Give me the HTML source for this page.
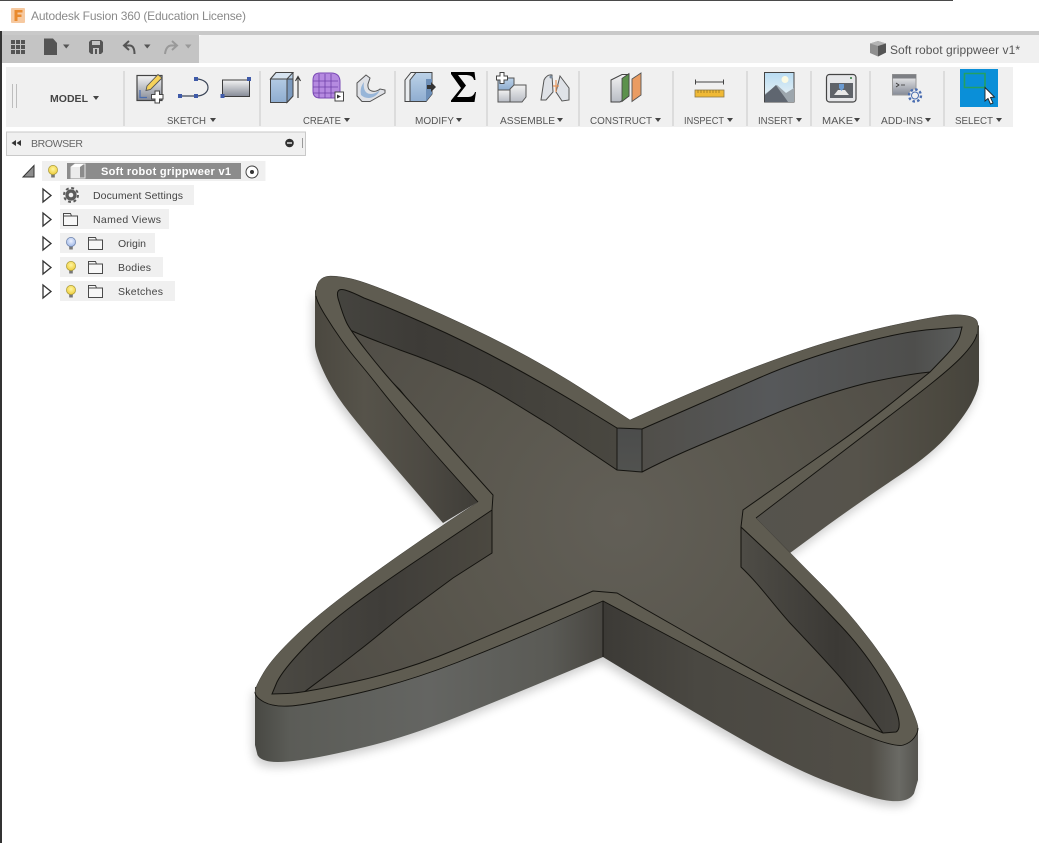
<!DOCTYPE html>
<html><head><meta charset="utf-8"><title>Autodesk Fusion 360</title>
<style>
html,body{margin:0;padding:0;background:#fff;width:1039px;height:843px;overflow:hidden}
svg{display:block;position:absolute;left:0;top:0}
text{font-family:"Liberation Sans",sans-serif;font-size:10.5px;fill:#555}
</style></head><body>
<svg xmlns="http://www.w3.org/2000/svg" width="1039" height="843" viewBox="0 0 1039 843">
<defs>
<linearGradient id="g1" x1="0" y1="0" x2="0" y2="1"><stop offset="0" stop-color="#f4f4f4"/><stop offset="1" stop-color="#858a96"/></linearGradient>
<linearGradient id="gB" x1="0" y1="0" x2="0" y2="1"><stop offset="0" stop-color="#bcd2e8"/><stop offset="1" stop-color="#8fadd0"/></linearGradient>
<linearGradient id="gG" x1="0" y1="0" x2="0" y2="1"><stop offset="0" stop-color="#f2f2f2"/><stop offset="1" stop-color="#b8bcc4"/></linearGradient>
<linearGradient id="sky" x1="0" y1="0" x2="0" y2="1"><stop offset="0" stop-color="#b9dcf3"/><stop offset="1" stop-color="#eef4f4"/></linearGradient>
<radialGradient id="bulbY" cx=".5" cy=".4" r=".6"><stop offset="0" stop-color="#fff6a0"/><stop offset="1" stop-color="#eecb3a"/></radialGradient>
<radialGradient id="bulbB" cx=".5" cy=".4" r=".6"><stop offset="0" stop-color="#eef3ff"/><stop offset="1" stop-color="#9db6e6"/></radialGradient>
<g id="folder"><path d="M.5,.5H7.5L8.5,3H14.5V12.5H.5Z M.5,3H8.5" fill="#f7f7f7" stroke="#4a4a4a" stroke-width="1"/></g>
<g id="tri"><path d="M1,.5L9,7L1,13.5Z" fill="#fff" stroke="#333" stroke-width="1.3"/></g>
<g id="bulbYs"><path d="M-1.8,3H1.8V6.5H-1.8Z" fill="#777"/><circle cy="-1" r="4.6" fill="url(#bulbY)" stroke="#a89a3a" stroke-width=".7"/></g>
<g id="bulbBs"><path d="M-1.8,3H1.8V6.5H-1.8Z" fill="#777"/><circle cy="-1" r="4.6" fill="url(#bulbB)" stroke="#6c80a8" stroke-width=".7"/></g>

<path id="O" d="M630,420Q700,388 750,369Q800,350 835,340Q870,330 901.5,323.5Q933,317 945,315.5Q957,314 966,315.5Q975,317 977,321Q979,325 977,334Q975,343 961,357.5Q947,372 907,402.5Q867,433 756,518L781.5,544Q807,570 823.5,586.5Q840,603 856.5,623Q873,643 886.5,663Q900,683 909,703Q918,723 918,728Q918,733 914,738Q910,743 903.5,745Q897,747 877,740Q857,733 807,708Q757,683 680,642L603,601L555,622Q507,643 457,662.5Q407,682 357,693.5Q307,705 290,706Q273,707 264,702Q255,697 255,692Q255,687 264,672Q273,657 298,633.5Q323,610 371.5,575Q420,540 478,502L455.500,477Q433,452 413,428.5Q393,405 380,388.5Q367,372 358.5,362Q350,352 341.5,340Q333,328 325,315Q317,302 316,296Q315,290 317.5,284Q320,278 326.5,276.5Q333,275 350,278.5Q367,282 417,303.5Q467,325 508.5,346.5Q550,368 590,394L630,420Z"/>
<path id="I" d="M642,429L681,412Q720,395 760,377.5Q800,360 850,346Q900,332 931,329.5L962,327L960,335Q958,343 944,357.5L930,372L898.500,397.500Q867,423 833.5,446.5Q800,470 771.5,490L743,510L741,527L764,548.5Q787,570 805,588.5Q823,607 840,625Q857,643 870,661.5Q883,680 890.5,696.5Q898,713 899,721.5Q900,730 896,732L883,733L853,720Q823,707 790,690Q757,673 687,633L617,593L593,591L550,609.5Q507,628 457,649Q407,670 355,681.5Q303,693 287.5,693.5L272,694L277,682Q283,670 303,649Q323,628 348,609Q373,590 410,565Q447,540 492,510L493,495L475,475Q457,455 435,430Q413,405 398,388.5Q383,372 366.5,351Q350,330 346.5,322.5Q343,315 339,301.5Q334,287 345,290Q352,292 364,298Q383,305 425,323.5Q467,342 508.5,364.5Q550,387 583.5,407.5L617,428Z"/>
<path id="F" d="M617,470L642,472C680,452 725,435 767,417C800,403 835,391 867,383C890,378 910,374 930,372L945,372L800,490L741,527L741,567C760,585 772,603 790,623C808,642 825,660 840,677C855,695 870,715 883,733L883,745L600,620L300,700L303,693C320,680 338,667 357,652C373,640 390,625 407,612C423,600 438,589 453,578L492,553L492,510L480,490L400,390L345,335L350,330C365,337 382,343 400,350C423,358 445,367 467,377C495,390 525,410 550,425C572,440 595,455 617,470Z"/>
<clipPath id="clipI"><use href="#I"/></clipPath>

<linearGradient id="wUL" gradientUnits="userSpaceOnUse" x1="315" y1="0" x2="480" y2="0"><stop offset="0" stop-color="#4b4840"/><stop offset=".3" stop-color="#56534a"/><stop offset=".65" stop-color="#4d4a43"/><stop offset="1" stop-color="#3e3c37"/></linearGradient>
<linearGradient id="wR" gradientUnits="userSpaceOnUse" x1="756" y1="0" x2="980" y2="0"><stop offset="0" stop-color="#55534d"/><stop offset=".45" stop-color="#56534b"/><stop offset=".85" stop-color="#4b483f"/><stop offset="1" stop-color="#45433c"/></linearGradient>
<linearGradient id="wLL" gradientUnits="userSpaceOnUse" x1="255" y1="0" x2="603" y2="0"><stop offset="0" stop-color="#484843"/><stop offset=".1" stop-color="#5b5c57"/><stop offset=".5" stop-color="#646562"/><stop offset=".85" stop-color="#5a5a55"/><stop offset="1" stop-color="#484641"/></linearGradient>
<linearGradient id="wLR" gradientUnits="userSpaceOnUse" x1="603" y1="0" x2="918" y2="0"><stop offset="0" stop-color="#3c3a36"/><stop offset=".3" stop-color="#4a4842"/><stop offset=".85" stop-color="#514e47"/><stop offset=".94" stop-color="#6a6a65"/><stop offset="1" stop-color="#55544f"/></linearGradient>
<linearGradient id="iUL" gradientUnits="userSpaceOnUse" x1="335" y1="0" x2="617" y2="0"><stop offset="0" stop-color="#45443f"/><stop offset=".3" stop-color="#3d3b37"/><stop offset="1" stop-color="#494740"/></linearGradient>
<linearGradient id="iR" gradientUnits="userSpaceOnUse" x1="642" y1="0" x2="962" y2="0"><stop offset="0" stop-color="#504e49"/><stop offset=".4" stop-color="#56585a"/><stop offset=".85" stop-color="#4e4e4c"/><stop offset="1" stop-color="#5b5d5c"/></linearGradient>
<linearGradient id="iLL" gradientUnits="userSpaceOnUse" x1="272" y1="0" x2="492" y2="0"><stop offset="0" stop-color="#4b4943"/><stop offset=".5" stop-color="#3f3d39"/><stop offset="1" stop-color="#4b4840"/></linearGradient>
<linearGradient id="iLR" gradientUnits="userSpaceOnUse" x1="741" y1="0" x2="900" y2="0"><stop offset="0" stop-color="#4e4c46"/><stop offset=".6" stop-color="#3b3935"/><stop offset="1" stop-color="#46443f"/></linearGradient>
<linearGradient id="iC" x1="0" y1="0" x2="0" y2="1"><stop offset="0" stop-color="#4a4b4b"/><stop offset="1" stop-color="#525350"/></linearGradient>
<radialGradient id="fl" gradientUnits="userSpaceOnUse" cx="620" cy="520" r="330"><stop offset="0" stop-color="#625f57"/><stop offset=".5" stop-color="#5a574e"/><stop offset="1" stop-color="#504d46"/></radialGradient>
<filter id="bl" x="-10%" y="-10%" width="120%" height="120%"><feGaussianBlur stdDeviation="5"/></filter>
<path id="W1" d="M315,290L315,345Q315,353 324,372.5Q333,392 350,413.5Q367,435 405,479L443,523L478,502L420,420L345,310Z"/>
<path id="W2" d="M756,518L790,553L828,525Q867,497 900,475Q933,453 950,433Q967,413 973,400Q979,388 979,380L979,325L960,340L850,420Z"/>
<path id="W3" d="M255,687L255,745L257.5,755Q260,760 270,761.5Q280,763 301,760Q323,757 365,747Q407,737 457,717Q507,697 555,677L603,657L603,601L500,620L300,680Z"/>
<path id="W4" d="M603,601L603,657L646,683Q690,710 740,738.5Q790,767 823,780Q857,793 873,797.5Q890,802 900,801Q910,800 914,793.5L918,780L918,728L890,710L757,660L603,590Z"/>
</defs>

<rect width="1039" height="843" fill="#fff"/>

<!-- window chrome -->
<rect x="0" y="0" width="953" height="1" fill="#4a4a4a"/>
<rect x="0" y="31" width="1039" height="4" fill="#c9c9c9"/>
<rect x="0" y="31" width="2" height="812" fill="#333"/>
<rect x="2" y="35" width="197" height="28" fill="#c4c4c4"/>
<path d="M199,63V38Q199,35 202,35H1039V63Z" fill="#f0f0f0"/>

<!-- logo + title -->
<rect x="11" y="8" width="14" height="15" rx="1" fill="#f6c9a0"/>
<path d="M14.5,10H22.5V12.5H17.5V14.5H21.5V17H17.5V21H14.5Z" fill="#e98a2e"/>
<text x="31" y="20" style="font-size:12px;fill:#8a8a8a" textLength="215" lengthAdjust="spacing">Autodesk Fusion 360 (Education License)</text>

<!-- QAT -->
<g fill="#555">
<path d="M11,40h4v4h-4zM16,40h4v4h-4zM21,40h4v4h-4zM11,45h4v4h-4zM16,45h4v4h-4zM21,45h4v4h-4zM11,50h4v4h-4zM16,50h4v4h-4zM21,50h4v4h-4z"/>
<path d="M44,38.500H53L57,43V55H44Z"/>
<path d="M63,44.500H69.500L66.250,48.500Z"/>
<path d="M91,40H101L103,42V52L101,54H91L89,52V42Z"/>
<path d="M144,44.500H150.500L147.250,48.500Z"/>
</g>
<rect x="92" y="41" width="8" height="4" fill="#c4c4c4"/><rect x="93" y="48" width="6" height="6" fill="#c4c4c4"/><rect x="95" y="49" width="2" height="5" fill="#555"/>
<path d="M129,41L124,45.500L129,50" fill="none" stroke="#555" stroke-width="2"/><path d="M124.500,45.500H130Q134.500,46 134.500,54" fill="none" stroke="#555" stroke-width="2"/>
<path d="M172,41L177,45.500L172,50" fill="none" stroke="#999" stroke-width="2"/><path d="M176.500,45.500H171Q166,46 165,54" fill="none" stroke="#999" stroke-width="2"/>
<path d="M185,44.500H191.500L188.250,48.500Z" fill="#999"/>

<!-- doc tab -->
<path d="M878,41L886,43.500V52.500L878,56.500L870,53V43.500Z" fill="#8f8f8f"/><path d="M878,41L886,43.500L878,46L870,43.500Z" fill="#b4b4b4"/><path d="M878,46L886,43.500V52.500L878,56.500Z" fill="#555"/>
<text x="890" y="54" style="font-size:12px;fill:#555" textLength="130" lengthAdjust="spacing">Soft robot grippweer v1*</text>

<!-- toolbar -->
<rect x="6" y="67" width="1007" height="60" fill="#f0f0f0"/>
<g fill="#dcdcdc">
<rect x="123" y="71" width="2" height="55"/><rect x="259" y="71" width="2" height="55"/><rect x="394" y="71" width="2" height="55"/><rect x="486" y="71" width="2" height="55"/><rect x="578" y="71" width="2" height="55"/><rect x="672" y="71" width="2" height="55"/><rect x="746" y="71" width="2" height="55"/><rect x="810" y="71" width="2" height="55"/><rect x="869" y="71" width="2" height="55"/><rect x="943" y="71" width="2" height="55"/>
</g>
<path d="M12.500,84V108M16.500,84V108" stroke="#bdbdbd" stroke-width="1"/>
<text x="50" y="102" style="font-weight:bold;fill:#444" textLength="38" lengthAdjust="spacing">MODEL</text>
<path d="M93,96H99L96,100Z" fill="#444"/>

<g style="font-size:11px">
<text x="167" y="124" textLength="39" lengthAdjust="spacingAndGlyphs">SKETCH</text>
<text x="303" y="124" textLength="38" lengthAdjust="spacingAndGlyphs">CREATE</text>
<text x="415" y="124" textLength="39" lengthAdjust="spacingAndGlyphs">MODIFY</text>
<text x="500" y="124" textLength="55" lengthAdjust="spacingAndGlyphs">ASSEMBLE</text>
<text x="590" y="124" textLength="62" lengthAdjust="spacingAndGlyphs">CONSTRUCT</text>
<text x="684" y="124" textLength="40" lengthAdjust="spacingAndGlyphs">INSPECT</text>
<text x="758" y="124" textLength="35" lengthAdjust="spacingAndGlyphs">INSERT</text>
<text x="822" y="124" textLength="31" lengthAdjust="spacingAndGlyphs">MAKE</text>
<text x="881" y="124" textLength="42" lengthAdjust="spacingAndGlyphs">ADD-INS</text>
<text x="955" y="124" textLength="38" lengthAdjust="spacingAndGlyphs">SELECT</text>
</g>
<g fill="#444">
<path d="M210,118H216L213,122Z"/><path d="M344,118H350L347,122Z"/><path d="M456,118H462L459,122Z"/><path d="M557,118H563L560,122Z"/><path d="M655,118H661L658,122Z"/><path d="M727,118H733L730,122Z"/><path d="M796,118H802L799,122Z"/><path d="M854,118H860L857,122Z"/><path d="M925,118H931L928,122Z"/><path d="M996,118H1002L999,122Z"/>
</g>

<!-- sketch icon -->
<rect x="137" y="75.500" width="25" height="25" fill="url(#g1)" stroke="#444" stroke-width="1.2"/>
<path d="M140,90V97.500H147" fill="none" stroke="#4a6db0" stroke-width="1.2"/>
<path d="M147,86L158,74.500L162,78L150.500,89.500L146,90.500Z" fill="#f6d25a" stroke="#555" stroke-width=".9"/>
<path d="M155,91H159.500V94.500H163V99H159.500V103H155V99H151.500V94.500H155Z" fill="#fff" stroke="#444" stroke-width="1"/>
<!-- line arc -->
<path d="M180,96H196M196,79C212,79 212,96 196,96" fill="none" stroke="#3c4658" stroke-width="1.2"/>
<path d="M178,94h4v4h-4zM194,94h4v4h-4zM194,77h4v4h-4z" fill="#3f5aa8"/>
<!-- rect -->
<rect x="222.500" y="80" width="27" height="16.500" fill="url(#g1)" stroke="#3c3c3c" stroke-width="1"/>
<path d="M220.500,94h4v4h-4zM247,77h4v4h-4z" fill="#3f5aa8"/>
<!-- extrude -->
<path d="M270.500,79L276,72.500H293V96L287,102.500H270.500Z" fill="url(#gB)" stroke="#444" stroke-width="1"/>
<path d="M270.500,79L276,72.500H293L287,79Z" fill="#d6e3f0" stroke="#444" stroke-width="1"/>
<path d="M287,79H293V96L287,102.500Z" fill="#7b9abf" stroke="#444" stroke-width="1"/>
<path d="M298,98V78M295.500,81L298,76.500L300.500,81" fill="none" stroke="#333" stroke-width="1.1"/>
<!-- form -->
<path d="M313,80Q313,73 320,73H331Q340,73 340,82V92Q340,98 334,98H320Q313,98 313,91Z" fill="#b58ae0" stroke="#7a4ab5" stroke-width="1"/>
<path d="M313,81H338M313,87H338M313,93H338M319,74V98M325,74V98M331,74V98" stroke="#6f3fa8" stroke-width=".8" fill="none"/>
<rect x="335" y="92" width="8.500" height="9" fill="#fff" stroke="#444" stroke-width="1"/><path d="M337,94.500L341,96.500L337,98.500Z" fill="#333"/>
<!-- fillet -->
<path d="M357,83L366,75L370,78L368,84C367,92 375,93 380,89L385,90V93L370,101.500H362L357,96Z" fill="#dfe1e6" stroke="#555" stroke-width="1"/>
<path d="M364,82C362,95 372,97 380,90C376,99 366,100 361,95C360,90 361,86 364,82Z" fill="#97b5d8"/>
<!-- press pull -->
<path d="M405,80L411,72.500H432V94L426,101.500H405Z" fill="#e9ecef" stroke="#444" stroke-width="1"/>
<path d="M410,80L416,72.500H432V94L426,101.500H410Z" fill="url(#gB)" stroke="#444" stroke-width="1"/>
<path d="M426,79H432V94L426,101.500Z" fill="#6d8fb8"/>
<path d="M427,85H431V82L436,87L431,92V89H427Z" fill="#333"/>
<!-- sigma -->
<path d="M451,72H474.500L475.500,80H474C473,76 470,75 465,75H458L466,85.500L457,97H468C472,97 474,95 475,92H476L474.500,102H451V100.500L461,88L451,74Z" fill="#000"/>
<!-- assemble -->
<path d="M498,78H514V90H498Z" fill="url(#gB)" stroke="#555" stroke-width="1"/>
<path d="M498,90H510V102H498Z" fill="url(#gG)" stroke="#555" stroke-width="1"/>
<path d="M510,89L514,85H526V97L522,102H510Z" fill="url(#gG)" stroke="#555" stroke-width="1"/>
<path d="M500,72.500H504V76H507.500V80H504V83.500H500V80H496.500V76H500Z" fill="#fff" stroke="#444" stroke-width="1"/>
<!-- joint -->
<path d="M541,100L544,80Q547,74 552,75L553,92L546,100Z" fill="#dfe2e7" stroke="#555" stroke-width="1"/>
<path d="M560,76L569,88V100L562,101L556,92Z" fill="#dfe2e7" stroke="#555" stroke-width="1"/>
<path d="M556,80V92M553,86H559" stroke="#e8955a" stroke-width="1.2"/>
<circle cx="551" cy="77" r="1.500" fill="#7a8a9c"/>
<!-- construct -->
<path d="M611,80L622,74.500H629V96L620,102H611Z" fill="url(#gG)" stroke="#444" stroke-width="1"/>
<path d="M622,78.500L629,73.500V96L622,101.500Z" fill="#5c914c" stroke="#444" stroke-width=".8"/>
<path d="M632,79L641,73V95L632,101.500Z" fill="#ea9c62" stroke="#555" stroke-width=".9"/>
<!-- inspect -->
<path d="M695,82H724M695.500,79.500V84.500M723.500,79.500V84.500" stroke="#444" stroke-width="1" fill="none"/>
<rect x="695" y="90" width="29" height="7" fill="#f0b935" stroke="#8c7a4a" stroke-width=".8"/>
<path d="M698,90v3M701,90v3M704,90v3M707,90v3M710,90v3M713,90v3M716,90v3M719,90v3" stroke="#8c6e20" stroke-width=".7"/>
<!-- insert -->
<rect x="764.500" y="72.500" width="29.500" height="29.500" fill="url(#sky)" stroke="#444" stroke-width="1"/>
<circle cx="785" cy="79.500" r="3.500" fill="#fbfae4"/>
<path d="M765,102V94L777,85L786,93L794,88V102Z" fill="#9da6ad"/>
<path d="M765,102V95L776,85C779,90 785,97 788,102Z" fill="#5f6670"/>
<!-- make -->
<rect x="826.500" y="74.500" width="29.500" height="27.500" rx="3" fill="#e6e7e9" stroke="#444" stroke-width="1.2"/>
<rect x="830" y="83" width="23" height="15" fill="#5f6369"/>
<path d="M834,95L838,90H845L849,95Z" fill="#e8e8e8"/>
<path d="M839,84H844V88L841.500,91L839,88Z" fill="#6a9ad0"/>
<circle cx="851" cy="78" r="1" fill="#2d7a3a"/>
<!-- addins -->
<rect x="892.500" y="74.500" width="23.500" height="20.500" fill="url(#g1)" stroke="#999" stroke-width="1"/>
<rect x="892.500" y="74.500" width="23.500" height="4" fill="#7d7f84"/>
<path d="M896,83L899,85L896,87M901,85H905" fill="none" stroke="#333" stroke-width=".8"/>
<circle cx="915" cy="95.500" r="6" fill="#f0f0f0" stroke="#4a6db0" stroke-width="2.400" stroke-dasharray="2.500 2.200"/>
<circle cx="915" cy="95.500" r="3.500" fill="#f0f0f0" stroke="#4a6db0" stroke-width="1"/>
<!-- select -->
<rect x="960" y="69" width="38" height="38" fill="#0a8fd8"/>
<path d="M964.500,73.500H985V87.500H964.500Z" fill="none" stroke="#23a063" stroke-width="1.600"/>
<path d="M985,87.500V101L988,98.500L990.500,104L993,103L990.500,97.500L994.500,97Z" fill="#fff" stroke="#222" stroke-width=".9"/>

<!-- browser -->
<rect x="6.500" y="132" width="299" height="23.500" fill="#f0f0f0" stroke="#c9c9c9" stroke-width="1"/>
<path d="M16,140V146L11.500,143ZM21,140V146L16.500,143Z" fill="#333"/>
<text x="31" y="147" style="fill:#666" textLength="52" lengthAdjust="spacing">BROWSER</text>
<circle cx="289.500" cy="143" r="4.300" fill="#2f2f2f"/><rect x="287" y="142.300" width="5" height="1.400" fill="#f0f0f0"/>
<path d="M302.500,138V148" stroke="#999" stroke-width="1"/>

<!-- tree -->
<rect x="42" y="161" width="223.500" height="20" fill="#f0f0f0"/>
<rect x="67" y="163" width="174" height="16" fill="#8c8c8c"/>
<path d="M34,165.500V177H23Z" fill="#8d8d8d" stroke="#333" stroke-width="1"/>
<use href="#bulbYs" x="53" y="171"/>
<path d="M71,167L75,164H85V178H71Z" fill="#8c8c8c" stroke="#e8e8e8" stroke-width="1"/><path d="M71,167H80V178H71Z" fill="#ececec"/><path d="M71,167L75,164H84L80,167Z" fill="#fff"/>
<text x="101" y="175" style="fill:#fff;font-weight:bold;font-size:11px" textLength="130" lengthAdjust="spacing">Soft robot grippweer v1</text>
<circle cx="252" cy="172" r="6" fill="#fff" stroke="#444" stroke-width="1"/><circle cx="252" cy="172" r="2" fill="#333"/>

<rect x="60" y="185" width="134" height="20" fill="#f0f0f0"/>
<rect x="60" y="209" width="109" height="20" fill="#f0f0f0"/>
<rect x="60" y="233" width="95" height="20" fill="#f0f0f0"/>
<rect x="60" y="257" width="103" height="20" fill="#f0f0f0"/>
<rect x="60" y="281" width="115" height="20" fill="#f0f0f0"/>
<use href="#tri" x="42" y="188.500"/><use href="#tri" x="42" y="212.500"/><use href="#tri" x="42" y="236.500"/><use href="#tri" x="42" y="260.500"/><use href="#tri" x="42" y="284.500"/>
<circle cx="71" cy="195" r="5.600" fill="#5a5a5a"/>
<circle cx="71" cy="195" r="7" fill="none" stroke="#5a5a5a" stroke-width="2" stroke-dasharray="2.900 2.600"/>
<circle cx="71" cy="195" r="2.300" fill="#f0f0f0"/>
<use href="#folder" x="63" y="213"/>
<use href="#bulbBs" x="71" y="243"/><use href="#folder" x="88" y="237"/>
<use href="#bulbYs" x="71" y="267"/><use href="#folder" x="88" y="261"/>
<use href="#bulbYs" x="71" y="291"/><use href="#folder" x="88" y="285"/>
<g style="font-size:11px">
<text x="93" y="199" style="fill:#444" textLength="90" lengthAdjust="spacing">Document Settings</text>
<text x="93" y="223" style="fill:#444" textLength="68" lengthAdjust="spacing">Named Views</text>
<text x="118" y="247" style="fill:#444" textLength="28" lengthAdjust="spacing">Origin</text>
<text x="118" y="271" style="fill:#444" textLength="33" lengthAdjust="spacing">Bodies</text>
<text x="118" y="295" style="fill:#444" textLength="45" lengthAdjust="spacing">Sketches</text>
</g>

<!-- 3D model -->
<g filter="url(#bl)" opacity=".2" transform="translate(-2,5)">
<use href="#W1"/><use href="#W2"/><use href="#W3"/><use href="#W4"/>
</g>
<use href="#W1" fill="url(#wUL)"/>
<use href="#W2" fill="url(#wR)"/>
<use href="#W3" fill="url(#wLL)"/>
<use href="#W4" fill="url(#wLR)"/>
<use href="#O" fill="#5f5c51" stroke="#2c2b26" stroke-width=".4"/>
<path d="M977,334Q975,343 961,357.5Q947,372 907,402.5Q867,433 756,518M918,728Q918,733 914,738Q910,743 903.5,745Q897,747 877,740Q857,733 807,708Q757,683 680,642L603,601L555,622Q507,643 457,662.5Q407,682 357,693.5Q307,705 290,706Q273,707 264,702Q255,697 255,692M478,502L455.500,477Q433,452 413,428.5Q393,405 380,388.5Q367,372 358.5,362Q350,352 341.5,340Q333,328 325,315Q317,302 316,296" fill="none" stroke="#14130f" stroke-width=".9"/>
<g clip-path="url(#clipI)">
<rect x="320" y="270" width="297" height="240" fill="url(#iUL)"/>
<rect x="260" y="510" width="232" height="210" fill="url(#iLL)"/>
<rect x="642" y="300" width="340" height="230" fill="url(#iR)"/>
<rect x="741" y="527" width="170" height="220" fill="url(#iLR)"/>
<rect x="617" y="420" width="25" height="60" fill="url(#iC)"/>
<use href="#F" fill="url(#fl)" stroke="#14130f" stroke-width="1"/>
</g>
<use href="#I" fill="none" stroke="#14130f" stroke-width="1"/>
<path d="M603,601V657M617,428V470M642,429V472M741,527V567M492,510V553" stroke="#14130f" stroke-width=".9" fill="none"/>
</svg>
</body></html>
